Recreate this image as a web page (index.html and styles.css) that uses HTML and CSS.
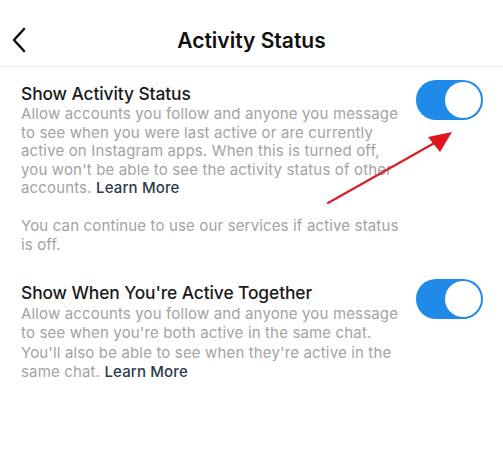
FILE: index.html
```html
<!DOCTYPE html>
<html>
<head>
<meta charset="utf-8">
<link rel="stylesheet" href="styles.css">
</head>
<body>
<div class="screen">
  <header class="topbar">
    <svg class="back" width="16" height="26" viewBox="0 0 16 26"><path d="M13 2 L3 13 L13 24" fill="none" stroke="#111" stroke-width="2.6" stroke-linecap="round" stroke-linejoin="round"/></svg>
    <h1 class="title">Activity Status</h1>
  </header>
  <main class="content">
    <section class="setting">
      <div class="text">
        <h2 class="label">Show Activity Status</h2>
        <p class="desc">Allow accounts you follow and anyone you message<br>to see when you were last active or are currently<br>active on Instagram apps. When this is turned off,<br>you won't be able to see the activity status of other<br>accounts. <span class="link">Learn More</span></p>
        <p class="desc note">You can continue to use our services if active status<br>is off.</p>
      </div>
      <div class="toggle"><div class="knob"></div></div>
    </section>
    <section class="setting second">
      <div class="text">
        <h2 class="label">Show When You're Active Together</h2>
        <p class="desc loose">Allow accounts you follow and anyone you message<br>to see when you're both active in the same chat.<br>You'll also be able to see when they're active in the<br>same chat. <span class="link">Learn More</span></p>
      </div>
      <div class="toggle"><div class="knob"></div></div>
    </section>
  </main>
  <svg class="arrow" width="503" height="450" viewBox="0 0 503 450">
    <line x1="328" y1="203" x2="438" y2="141" stroke="#d4202a" stroke-width="2.2" stroke-linecap="round"/>
    <polygon points="452,132 428,137 440,152" fill="#e0161e"/>
  </svg>
</div>
</body>
</html>
```
FILE: styles.css
```css
html, body {
  margin: 0;
  padding: 0;
  background: #fff;
}
.screen {
  position: relative;
  width: 503px;
  height: 450px;
  overflow: hidden;
  font-family: Inter, "Helvetica Neue", Arial, sans-serif;
  color: #111;
}
.topbar {
  height: 67px;
  border-bottom: 1px solid #efefef;
  display: flex;
  align-items: center;
  justify-content: center;
  position: relative;
  box-sizing: border-box;
  padding-top: 14px;
}
.back {
  position: absolute;
  left: 11px;
  top: 27px;
}
.title {
  margin: 0;
  font-size: 21px;
  font-weight: 600;
  letter-spacing: 0;
  color: #111;
}
.content {
  padding: 0 20px 0 21px;
}
.setting {
  display: flex;
  justify-content: space-between;
  align-items: flex-start;
  padding-top: 17px;
}
.setting.second {
  padding-top: 29px;
}
.text {
  width: 392px;
  white-space: nowrap;
}
.label {
  margin: 0;
  font-size: 17.4px;
  font-weight: 500;
  line-height: 20px;
  color: #1a1a1a;
  letter-spacing: -0.1px;
}
.desc {
  margin: 1px 0 0;
  font-size: 15px;
  line-height: 18.6px;
  color: #a3a3a3;
  letter-spacing: 0.15px;
}
.desc.loose {
  line-height: 19.2px;
}
.note {
  margin-top: 19px;
}
.link {
  color: #2b3a4b;
  font-weight: 500;
}
.toggle {
  width: 67px;
  height: 40px;
  border-radius: 20px;
  background: #1f8ae8;
  box-sizing: border-box;
  padding: 2px;
  display: flex;
  justify-content: flex-end;
  margin-top: -4px;
  flex-shrink: 0;
}
.knob {
  width: 36px;
  height: 36px;
  border-radius: 50%;
  background: #fff;
}
.arrow {
  position: absolute;
  left: 0;
  top: 0;
  pointer-events: none;
}
```
